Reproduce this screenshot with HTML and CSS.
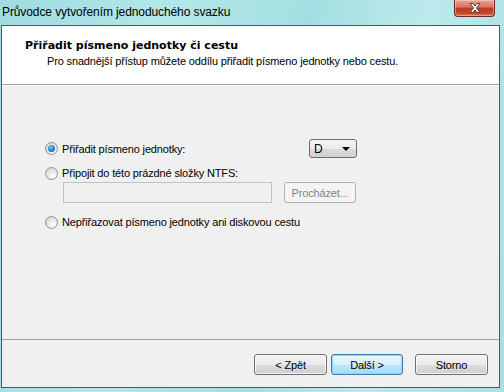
FILE: index.html
```html
<!DOCTYPE html>
<html>

<head>
    <meta charset="UTF-8" />
    <title>Průvodce vytvořením jednoduchého svazku</title>
    <link rel="stylesheet" href="styles.css">
</head>

<body>
    <div class="window">
        <div class="titlebar">
            <span class="title">Průvodce vytvořením jednoduchého svazku</span>
            <div class="close">
                <svg width="18" height="12" viewBox="0 0 18 12">
                    <path d="M4 1.5 L7 1.5 L9 4 L11 1.5 L14 1.5 L10.6 6 L14 10.5 L11 10.5 L9 8 L7 10.5 L4 10.5 L7.4 6 Z"
                        fill="#f4f4f4" stroke="#5a3a3a" stroke-width="1" stroke-linejoin="round" />
                </svg>
            </div>
        </div>

        <div class="client">
            <div class="header">
                <div class="head-title">Přiřadit písmeno jednotky či cestu</div>
                <div class="head-sub">Pro snadnější přístup můžete oddílu přiřadit písmeno jednotky nebo cestu.</div>
            </div>

            <div class="content">
                <div class="row row-letter">
                    <label class="option">
                        <span class="radio checked"></span>
                        Přiřadit písmeno jednotky:
                    </label>
                    <div class="combo">
                        <span>D</span>
                        <span class="arrow"></span>
                    </div>
                </div>

                <div class="row row-folder">
                    <label class="option">
                        <span class="radio"></span>
                        Připojit do této prázdné složky NTFS:
                    </label>
                </div>

                <div class="row row-path">
                    <div class="textbox"></div>
                    <button class="btn" disabled>Procházet...</button>
                </div>

                <div class="row row-none">
                    <label class="option">
                        <span class="radio"></span>
                        Nepřiřazovat písmeno jednotky ani diskovou cestu
                    </label>
                </div>
            </div>

            <div class="footer">
                <button class="btn">&lt; Zpět</button>
                <button class="btn default">Další &gt;</button>
                <button class="btn cancel">Storno</button>
            </div>
        </div>
    </div>
</body>

</html>
```

FILE: styles.css
```css
html,
body {
    margin: 0;
    height: 100%;
}

body {
    background: linear-gradient(100deg, #9fdcdf 0%, #b4e7e9 30%, #a3dfe2 55%, #bdeaec 75%, #a6e0e3 100%);
    font-family: "Liberation Sans", Arial, sans-serif;
    font-size: 11px;
    letter-spacing: -0.15px;
    color: #000;
    overflow: hidden;
}

.window {
    display: flex;
    flex-direction: column;
    height: 392px;
    width: 504px;
}

.titlebar {
    height: 25px;
    display: flex;
    justify-content: space-between;
    flex-shrink: 0;
}

.title {
    font-size: 12px;
    letter-spacing: -0.1px;
    padding-left: 2px;
    margin-top: 5px;
    color: #000;
}

.close {
    width: 41px;
    height: 17px;
    margin-right: 9px;
    box-sizing: border-box;
    border: 1px solid #6d2b22;
    border-top: none;
    border-radius: 0 0 4px 4px;
    background: linear-gradient(#e8a493 0%, #d9735d 45%, #c0391f 50%, #c7452a 80%, #d8754e 100%);
    display: flex;
    align-items: center;
    justify-content: center;
    box-shadow: inset 0 0 0 1px rgba(255, 255, 255, 0.35);
}

.client {
    flex: 1;
    margin: 0 4px 4px 1px;
    border: 1px solid #435c5e;
    background: #f0f0f0;
    display: flex;
    flex-direction: column;
}

.header {
    height: 59px;
    box-sizing: border-box;
    background: #fff;
    border-bottom: 1px solid #a0a0a0;
    padding: 13px 0 0 23px;
}

.head-title {
    font-family: "DejaVu Sans", "Liberation Sans", sans-serif;
    font-weight: bold;
    letter-spacing: 0;
    line-height: 14px;
}

.head-sub {
    padding-left: 22px;
    line-height: 14px;
    margin-top: 1px;
}

.content {
    height: 254px;
    box-sizing: border-box;
    border-top: 1px solid #fff;
    padding: 52px 0 0 43px;
}

.row {
    display: flex;
    align-items: center;
}

.row-letter {
    width: 312px;
    height: 21px;
    justify-content: space-between;
}

.row-folder {
    margin-top: 7px;
    height: 14px;
}

.row-path {
    margin-top: 2px;
    padding-left: 18px;
    gap: 12px;
}

.row-none {
    margin-top: 12px;
    height: 14px;
}

.option {
    display: flex;
    align-items: center;
    gap: 4px;
}

.radio {
    width: 13px;
    height: 13px;
    box-sizing: border-box;
    border-radius: 50%;
    border: 1px solid #8f9192;
    background: radial-gradient(circle at 65% 70%, #ffffff 0%, #e8e8e8 45%, #cfcfcf 100%);
    display: flex;
    align-items: center;
    justify-content: center;
}

.radio.checked::after {
    content: "";
    width: 7px;
    height: 7px;
    border-radius: 50%;
    background: radial-gradient(circle at 40% 35%, #7fd2f5 0%, #2a8fce 45%, #0b4e80 100%);
}

.combo {
    width: 48px;
    height: 19px;
    box-sizing: border-box;
    border: 1px solid #707070;
    border-radius: 3px;
    background: linear-gradient(#f2f2f2 0%, #ebebeb 50%, #dddddd 51%, #cfcfcf 100%);
    display: flex;
    align-items: center;
    justify-content: space-between;
    padding: 0 6px 0 4px;
    font-size: 12px;
}

.arrow {
    width: 0;
    height: 0;
    border-left: 4px solid transparent;
    border-right: 4px solid transparent;
    border-top: 4px solid #000;
}

.textbox {
    width: 209px;
    height: 21px;
    box-sizing: border-box;
    border: 1px solid #c2c2c2;
    background: #f0f0f0;
}

.btn {
    width: 73px;
    height: 21px;
    box-sizing: border-box;
    border: 1px solid #707070;
    border-radius: 3px;
    background: linear-gradient(#f2f2f2 0%, #ebebeb 50%, #dddddd 51%, #cfcfcf 100%);
    font-family: "Liberation Sans", Arial, sans-serif;
    font-size: 11px;
    letter-spacing: -0.15px;
    color: #000;
    padding: 0;
    box-shadow: inset 0 0 0 1px rgba(255, 255, 255, 0.7);
}

.btn:disabled {
    width: 72px;
    border-color: #adb2b5;
    background: #f4f4f4;
    color: #838383;
    box-shadow: none;
}

.btn.default {
    width: 72px;
    border-color: #3c7fb1;
    background: linear-gradient(#eaf6fd 0%, #d9f0fc 50%, #bee6fd 51%, #a7d9f5 100%);
    box-shadow: inset 0 0 0 1px #8fd6fb;
}

.footer {
    flex: 1;
    border-top: 1px solid #a0a0a0;
    display: flex;
    justify-content: flex-end;
    align-items: flex-start;
    padding: 14px 11px 0 0;
    gap: 4px;
}

.btn.cancel {
    margin-left: 8px;
}
```
